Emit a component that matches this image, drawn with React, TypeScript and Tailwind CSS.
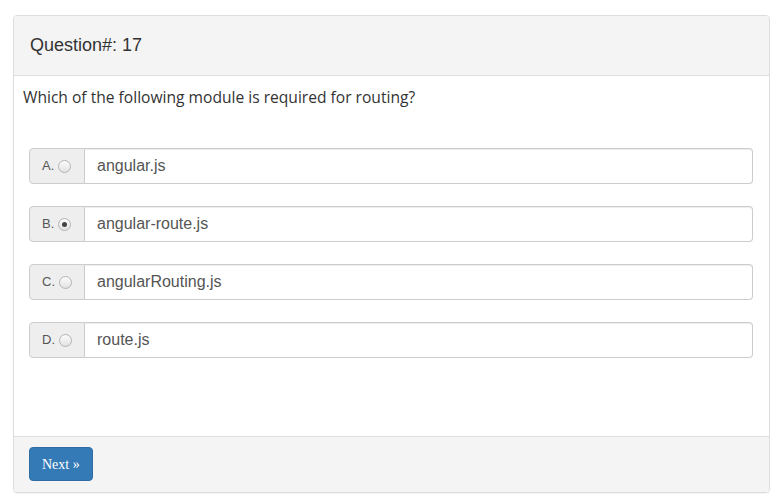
import React from "react";

const options = [
  { k: "A.", t: "angular.js", checked: false },
  { k: "B.", t: "angular-route.js", checked: true },
  { k: "C.", t: "angularRouting.js", checked: false },
  { k: "D.", t: "route.js", checked: false },
];

function Radio({ checked }: { checked: boolean }) {
  return (
    <span className="relative inline-block h-[13px] w-[13px] rounded-full border border-[#b4b4b4] bg-gradient-to-b from-[#fcfcfc] to-[#e2e2e2]">
      {checked && (
        <span className="absolute left-[3px] top-[3px] h-[5px] w-[5px] rounded-full bg-[#444]" />
      )}
    </span>
  );
}

export default function App() {
  return (
    <div className="h-[502px] w-[781px] bg-white pl-[13px] pt-[15px]" style={{ fontFamily: '"Liberation Sans", Arial, sans-serif' }}>
      <div className="flex h-[478px] w-[757px] flex-col overflow-hidden rounded-[4px] border border-[#dddddd] shadow-[0_1px_1px_rgba(0,0,0,0.05)]">
        <div className="flex h-[60px] shrink-0 items-center border-b border-[#dddddd] bg-[#f4f4f4] px-[16px] text-[18px] text-[#333]">
          Question#: 17
        </div>
        <div className="flex-1 px-[9px] pt-[11px]">
          <div className="text-[15.6px] leading-[20px] text-[#333]" style={{ fontFamily: '"Open Sans", sans-serif' }}>
            Which of the following module is required for routing?
          </div>
          <div className="mt-[41px] flex flex-col gap-[22px] pl-[6px] pr-[7px]">
            {options.map((o) => (
              <div key={o.k} className="flex h-[36px]">
                <div className="flex w-[56px] shrink-0 items-center gap-[4px] rounded-l-[4px] border border-[#cccccc] bg-[#eeeeee] pl-[12px] text-[13px] text-[#555]">
                  <span>{o.k}</span>
                  <Radio checked={o.checked} />
                </div>
                <div className="flex flex-1 items-center rounded-r-[4px] border border-l-0 border-[#cccccc] bg-white pl-[12px] text-[16px] text-[#555] shadow-[inset_0_1px_1px_rgba(0,0,0,0.075)]">
                  {o.t}
                </div>
              </div>
            ))}
          </div>
        </div>
        <div className="flex h-[56px] shrink-0 items-start border-t border-[#dddddd] bg-[#f4f4f4] pl-[15px] pt-[10px]">
          <button className="h-[34px] rounded-[4px] border border-[#2e6da4] bg-[#337ab7] px-[12px] text-[14px] text-white" style={{ fontFamily: '"Liberation Serif", "Times New Roman", serif' }}>
            Next »
          </button>
        </div>
      </div>
    </div>
  );
}
